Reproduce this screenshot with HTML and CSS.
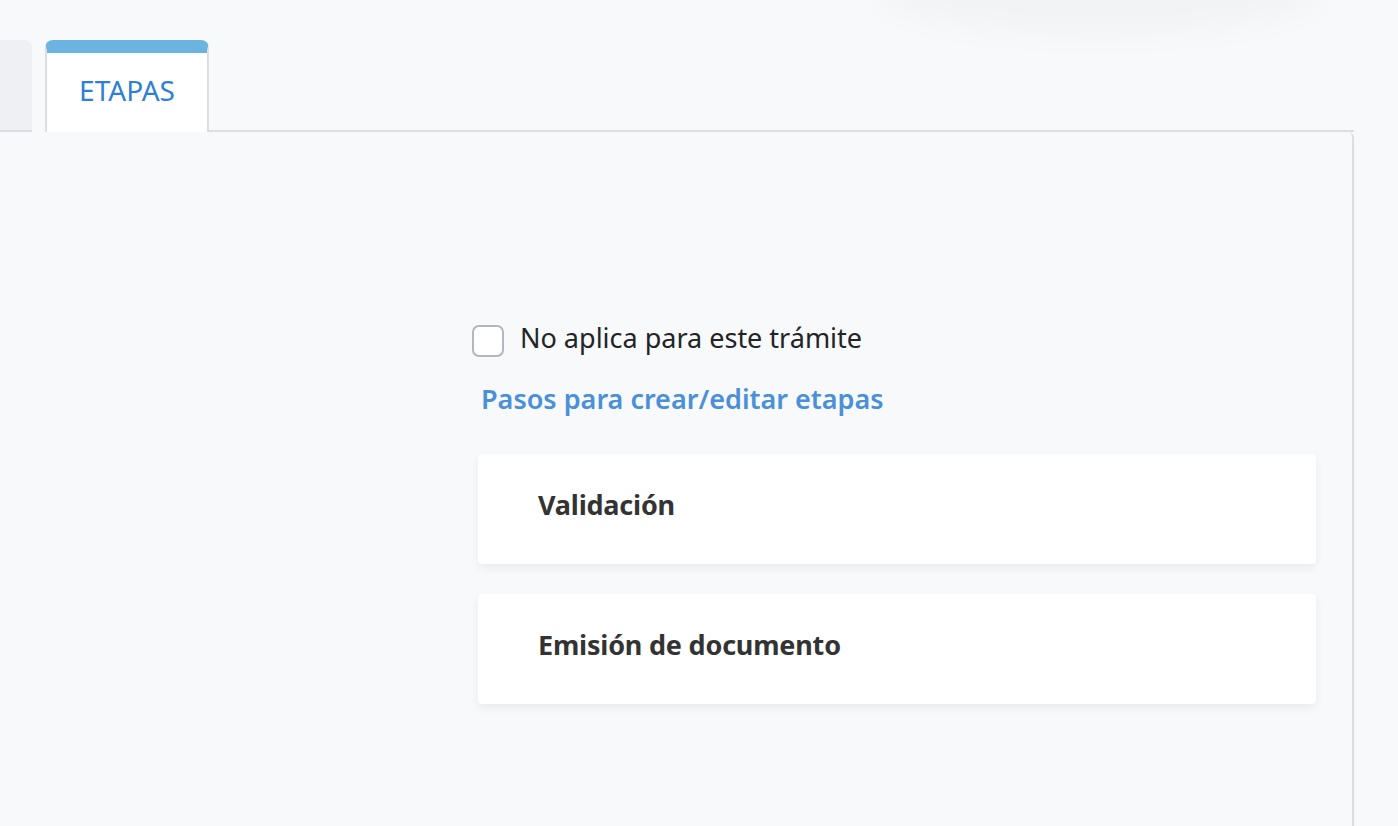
FILE: index.html
```html
<!DOCTYPE html>
<html lang="es">
<head>
<meta charset="utf-8">
<title>Etapas</title>
<link rel="stylesheet" href="styles.css">
</head>
<body>
<div class="glow"></div>
<div class="page">
  <div class="tabs">
    <div class="tab tab-prev"></div>
    <div class="tab tab-active">ETAPAS</div>
    <div class="tab-fill"></div>
  </div>
  <div class="panel">
    <div class="content">
      <label class="check">
        <span class="box"></span>
        <span class="check-label">No aplica para este trámite</span>
      </label>
      <a class="link" href="#">Pasos para crear/editar etapas</a>
      <div class="card">Validación</div>
      <div class="card">Emisión de documento</div>
    </div>
  </div>
</div>
</body>
</html>
```

FILE: styles.css
```css
html, body {
  margin: 0;
  padding: 0;
  height: 100%;
  background: #f8f9fb;
  overflow: hidden;
}
body {
  font-family: "Noto Sans", "Open Sans", sans-serif;
  position: relative;
}
.glow {
  position: absolute;
  left: 880px;
  top: -50px;
  width: 440px;
  height: 85px;
  border-radius: 50%;
  background: rgba(0, 0, 0, 0.025);
  filter: blur(14px);
}
.page {
  padding-top: 40px;
  width: 1354px;
}
.tabs {
  display: flex;
  align-items: flex-end;
  height: 92px;
}
.tab-prev {
  width: 32px;
  height: 92px;
  background: #eef0f3;
  border-top-right-radius: 8px;
  border-bottom: 2px solid #dcdee3;
  box-sizing: border-box;
}
.tab-active {
  margin-left: 13px;
  width: 164px;
  height: 92px;
  box-sizing: border-box;
  background: #fff;
  border-top: 13px solid #6cb4e0;
  border-left: 2px solid #dcdee3;
  border-right: 2px solid #dcdee3;
  border-radius: 8px 8px 0 0;
  display: flex;
  align-items: center;
  justify-content: center;
  color: #2f7fd6;
  font-size: 28px;
  padding-bottom: 6px;
}
.tab-fill {
  flex: 1;
  height: 0;
  border-bottom: 2px solid #dcdee3;
}
.panel {
  height: 700px;
  border-right: 2px solid #dcdee3;
  border-top-right-radius: 6px;
  box-sizing: border-box;
}
.content {
  margin-left: 478px;
  width: 838px;
  padding-top: 192px;
  display: flex;
  flex-direction: column;
}
.check {
  display: flex;
  align-items: center;
  gap: 16px;
  margin-left: -6px;
  height: 34px;
}
.box {
  width: 28px;
  height: 28px;
  border: 2px solid #b3b7bd;
  border-radius: 7px;
  background: #fff;
  flex: none;
}
.check-label {
  font-size: 27px;
  color: #222428;
  padding-bottom: 8px;
}
.link {
  margin-top: 24px;
  margin-left: 3px;
  font-size: 27px;
  font-weight: 600;
  color: #4a90d9;
  text-decoration: none;
  line-height: 34px;
}
.card {
  margin-top: 38px;
  height: 110px;
  box-sizing: border-box;
  background: #fff;
  border-radius: 4px;
  box-shadow: 0 4px 10px rgba(0, 0, 0, 0.06);
  display: flex;
  align-items: center;
  padding-left: 60px;
  padding-bottom: 10px;
  font-size: 27px;
  font-weight: 700;
  color: #333;
  letter-spacing: -0.2px;
}
.card + .card {
  margin-top: 30px;
}
```
